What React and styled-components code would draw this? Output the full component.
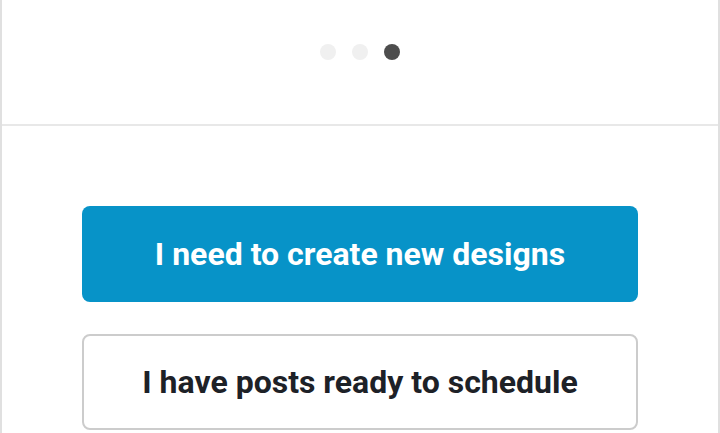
import React from 'react';
import styled, { createGlobalStyle } from 'styled-components';

const GlobalStyle = createGlobalStyle`
  html, body {
    margin: 0;
    padding: 0;
    background: #fff;
    font-family: Roboto, "Liberation Sans", sans-serif;
  }
`;

const Frame = styled.div`
  width: 720px;
  height: 433px;
  box-sizing: border-box;
  border-left: 2px solid #e0e0e0;
  border-right: 2px solid #e0e0e0;
  overflow: hidden;
`;

const Carousel = styled.div`
  height: 126px;
  box-sizing: border-box;
  border-bottom: 2px solid #e8e8e8;
  display: flex;
  justify-content: center;
  padding-top: 44px;
  gap: 16px;
`;

const Dot = styled.span`
  width: 16px;
  height: 16px;
  border-radius: 50%;
  background: ${p => (p.active ? '#4d4d4d' : '#f0f0f0')};
`;

const Actions = styled.div`
  padding: 80px 80px 0;
  display: flex;
  flex-direction: column;
  gap: 32px;
`;

const Choice = styled.button`
  height: 96px;
  box-sizing: border-box;
  border-radius: 8px;
  font-family: Roboto, "Liberation Sans", sans-serif;
  font-weight: 700;
  font-size: 32px;
  cursor: pointer;
  background: ${p => (p.primary ? '#0793c8' : '#fff')};
  color: ${p => (p.primary ? '#fff' : '#1d2127')};
  border: ${p => (p.primary ? 'none' : '2px solid #cccccc')};
`;

export default function App() {
  return (
    <>
      <GlobalStyle />
      <Frame>
        <Carousel>
          <Dot />
          <Dot />
          <Dot active />
        </Carousel>
        <Actions>
          <Choice primary>I need to create new designs</Choice>
          <Choice>I have posts ready to schedule</Choice>
        </Actions>
      </Frame>
    </>
  );
}
